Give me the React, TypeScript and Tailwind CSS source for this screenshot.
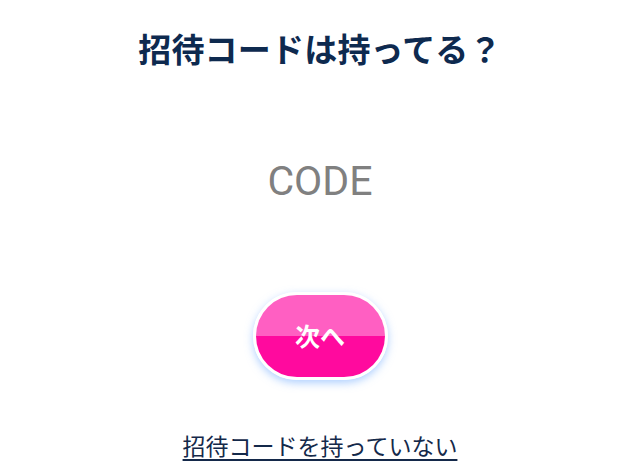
import React from "react";

export default function App() {
  return (
    <div className="w-[640px] h-[474px] bg-white flex flex-col items-center overflow-hidden" style={{ fontFamily: '"Noto Sans CJK JP", "Noto Sans", sans-serif' }}>
      <h1 className="shrink-0 mt-[26px] text-[33px] leading-[44px] font-bold text-[#0e2a4f] tracking-[0.2px]">
        招待コードは持ってる？
      </h1>
      <input
        className="shrink-0 mt-[87px] w-[400px] h-[48px] text-center text-[41px] leading-[48px] outline-none bg-transparent text-[#333] placeholder:text-[#808080]"
        style={{ fontFamily: 'Roboto, "Liberation Sans", sans-serif' }}
        placeholder="CODE"
      />
      <button className="shrink-0 mt-[87px] w-[135px] h-[88px] rounded-full border-[3px] border-white overflow-hidden flex flex-col relative shadow-[0_3px_8px_rgba(110,170,255,0.55)]">
        <div className="flex-1 bg-[#ff5fc2]" />
        <div className="flex-1 bg-[#ff0a9e]" />
        <span className="absolute inset-0 flex items-center justify-center text-white text-[25px] font-bold">
          次へ
        </span>
      </button>
      <a className="shrink-0 mt-[50px] text-[23px] leading-[30px] text-[#14294a] underline underline-offset-[4px] decoration-[2px] cursor-pointer">
        招待コードを持っていない
      </a>
    </div>
  );
}
